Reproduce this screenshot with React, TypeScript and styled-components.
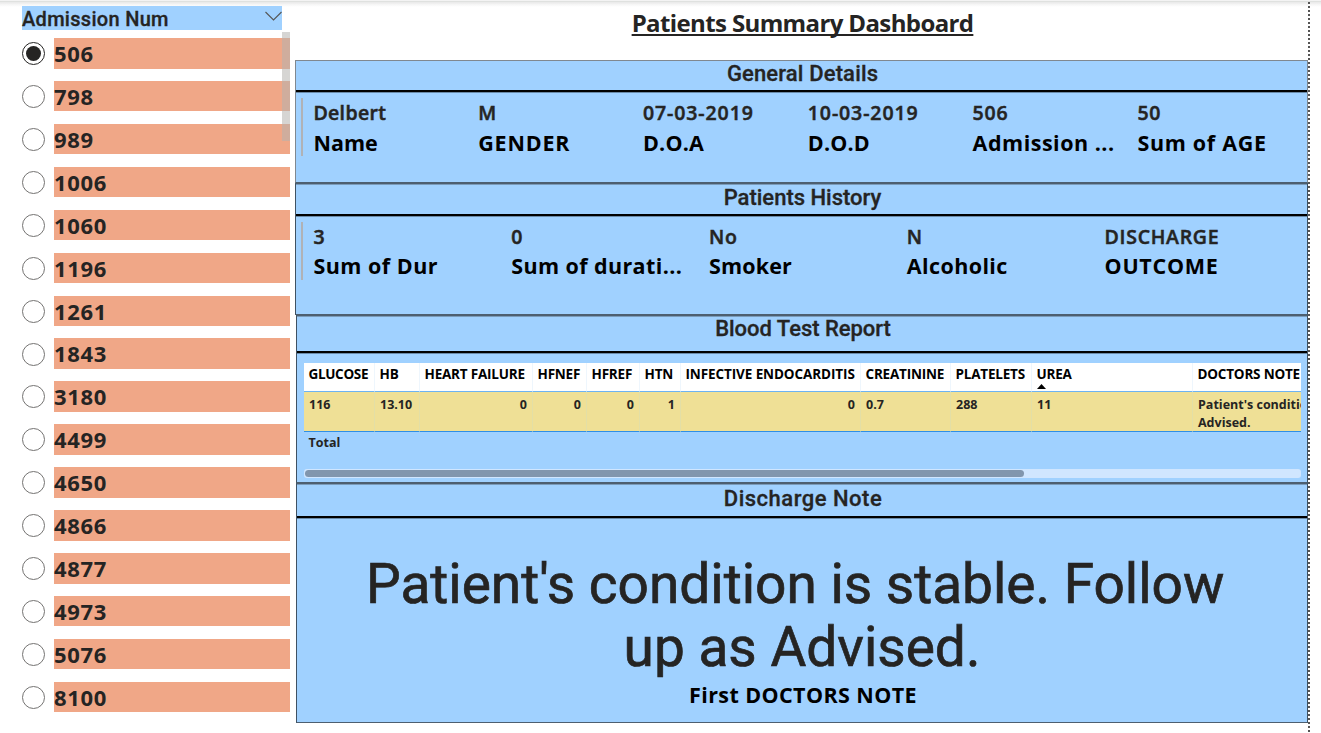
import React from "react";
import styled, { createGlobalStyle } from "styled-components";

const BLUE = "#a0d1ff";
const UI = `"Open Sans", "Noto Sans", sans-serif`;
const DIN = `Roboto, "Liberation Sans", sans-serif`;

const Global = createGlobalStyle`
  * { box-sizing: border-box; }
  body { margin: 0; background: #fff; color: #252423; font-family: ${UI}; overflow: hidden; }
`;

const Page = styled.div`
  position: relative;
  display: flex;
  width: 1321px;
  height: 733px;
  padding-left: 22px;
  overflow: hidden;
`;

const TopShadow = styled.div`
  position: absolute;
  inset: 0 0 auto 0;
  height: 7px;
  background: linear-gradient(#f3f3f3 0 1px, #dfe1df 1px 2px, #ebebeb 2px 3px, #f4f4f4 4px, #fff 7px);
`;

const Slicer = styled.aside`
  position: relative;
  width: 268px;
  padding-top: 6px;
`;

const SlicerHeader = styled.div`
  display: flex;
  justify-content: space-between;
  width: 260px;
  height: 24px;
  background: ${BLUE};
  font: 500 20px/26px ${DIN};
  letter-spacing: 0.3px;
  -webkit-text-stroke: 0.3px;
  svg { margin: 5px 0 0; }
`;

const Options = styled.div`
  display: flex;
  flex-direction: column;
  gap: 12.43px;
  padding-top: 8px;
`;

const Option = styled.label`
  display: flex;
  align-items: center;
  gap: 9px;
  height: 30.5px;
`;

const Radio = styled.span<{ $on?: boolean }>`
  display: grid;
  place-items: center;
  width: 23px;
  height: 23px;
  margin-top: 0.6px;
  border: 1.4px solid ${(p) => (p.$on ? "#252423" : "#747372")};
  border-radius: 50%;
  &::after {
    content: "";
    width: 15px;
    height: 15px;
    border-radius: 50%;
    background: ${(p) => (p.$on ? "#252423" : "transparent")};
  }
`;

const OptionText = styled.span`
  flex: 1;
  height: 30.5px;
  background: #f0a787;
  font: 700 22px/31px ${UI};
  letter-spacing: 0.7px;
`;

const SlicerThumb = styled.div`
  position: absolute;
  right: 0;
  top: 32px;
  width: 8px;
  height: 109px;
  background: rgba(180, 178, 174, 0.55);
`;

const Report = styled.main`
  width: 1013px;
  margin-left: 5px;
`;

const Title = styled.h1`
  margin: 0;
  height: 60px;
  padding: 6px 0 0 2px;
  text-align: center;
  font: 700 24px/34px ${UI};
  letter-spacing: -0.62px;
  text-decoration: underline;
  text-decoration-thickness: 2px;
  text-underline-offset: 2px;
  text-decoration-skip-ink: none;
`;

const Panel = styled.section<{ $h: number; $edge?: string; $indent?: boolean }>`
  height: ${(p) => p.$h}px;
  margin-left: ${(p) => (p.$indent ? 1 : 0)}px;
  background: ${BLUE};
  border: 1px solid ${(p) => p.$edge ?? "#3f5263"};
  border-bottom-color: #4d5f70;
  border-top-color: ${(p) => p.$edge ?? "#4d5f70"};
  box-shadow: ${(p) => (p.$edge ? "none" : "inset 0 1px #7a9bba")};
`;

const PanelTitle = styled.h2<{ $h: number; $ls: number; $lh?: number }>`
  margin: 0;
  height: ${(p) => p.$h}px;
  padding-left: 2px;
  border-bottom: 2px solid #000;
  box-shadow: 0 1px #6a8aa8;
  text-align: center;
  font: 500 22px/${(p) => p.$lh ?? 27}px ${DIN};
  letter-spacing: ${(p) => p.$ls}px;
  -webkit-text-stroke: 0.3px;
`;

const CardRow = styled.div<{ $cols: number; $pitch: number }>`
  display: grid;
  grid-template-columns: repeat(${(p) => p.$cols}, ${(p) => p.$pitch}px);
  height: 58px;
  margin: 6px 0 0 5px;
  padding-left: 10.4px;
  border-left: 2px solid #b0b2b6;
`;

const Field = styled.div`
  white-space: nowrap;
`;

const FieldValue = styled.div<{ $ls: number }>`
  font: 600 19.5px/29px ${UI};
  letter-spacing: ${(p) => p.$ls}px;
  -webkit-text-stroke: 0.5px;
`;

const FieldLabel = styled.div<{ $ls: number; $lh: number }>`
  color: #000;
  font: 700 21.5px/${(p) => p.$lh}px ${UI};
  letter-spacing: ${(p) => p.$ls}px;
`;

const Viewport = styled.div`
  width: 997px;
  margin: 10px 0 0 7px;
  overflow: hidden;
`;

const Grid = styled.div`
  display: grid;
  grid-template-columns: 71px 45px 113px 54px 53px 41px 180px 90px 81px 161px 260px;
  font: 700 12.5px/18px ${UI};
`;

const HeadCell = styled.div<{ $ls?: number }>`
  position: relative;
  height: 29px;
  padding: 2px 0 0 4.5px;
  background: #fff;
  color: #000;
  font-size: 13.5px;
  border-right: 1px solid #eef6fd;
  border-bottom: 1px solid #6db3f2;
  white-space: nowrap;
  letter-spacing: ${(p) => p.$ls ?? -0.2}px;
`;

const SortMark = styled.svg`
  position: absolute;
  left: 5px;
  top: 21px;
`;

const Cell = styled.div<{ $right?: boolean }>`
  height: 40px;
  padding: 4px 5px 0 5px;
  background: #efe096;
  border-right: 1px solid #e3dfa6;
  border-bottom: 1px solid #2f8fe6;
  text-align: ${(p) => (p.$right ? "right" : "left")};
  white-space: pre;
`;

const Total = styled.div`
  height: 37px;
  padding: 1px 0 0 4.5px;
  font: 700 12.5px/20px ${UI};
`;

const Track = styled.div`
  height: 9px;
  padding: 1px;
  border-radius: 3px;
  background: #d0e6ff;
`;

const Thumb = styled.div`
  width: 719px;
  height: 7px;
  border-radius: 4px;
  background: #8196ae;
`;

const Note = styled.div`
  padding-top: 35px;
  text-align: center;
  font: 400 55px/63px ${DIN};
  letter-spacing: 0;
  -webkit-text-stroke: 0.7px;
  white-space: pre;
`;

const NoteLabel = styled.div`
  padding-left: 2px;
  color: #000;
  text-align: center;
  font: 700 21.5px/32px ${UI};
  letter-spacing: 0.4px;
`;

const PageEdge = styled.div`
  position: absolute;
  left: 1308px;
  top: 2px;
  bottom: 0;
  width: 2px;
  background: repeating-linear-gradient(#555 0 2px, #fff 2px 4px);
`;

const ids = ["506", "798", "989", "1006", "1060", "1196", "1261", "1843", "3180", "4499", "4650", "4866", "4877", "4973", "5076", "8100"];

type Item = { value: string; label: string; valueLs?: number; labelLs?: number };

const general: Item[] = [
  { value: "Delbert", label: "Name", valueLs: 0.35, labelLs: 0.05 },
  { value: "M", label: "GENDER", labelLs: 0.8 },
  { value: "07-03-2019", label: "D.O.A", valueLs: 0.9, labelLs: 0.2 },
  { value: "10-03-2019", label: "D.O.D", valueLs: 0.9, labelLs: 0.2 },
  { value: "506", label: "Admission ..." },
  { value: "50", label: "Sum of AGE", labelLs: 0.7 },
];

const history: Item[] = [
  { value: "3", label: "Sum of Dur" },
  { value: "0", label: "Sum of durati...", labelLs: 0.4 },
  { value: "No", label: "Smoker", labelLs: 0.15 },
  { value: "N", label: "Alcoholic", labelLs: 0.4 },
  { value: "DISCHARGE", label: "OUTCOME", valueLs: 0.7, labelLs: 0.7 },
];

const tests: { head: string; value: string; right?: boolean; sorted?: boolean; ls?: number }[] = [
  { head: "GLUCOSE", value: "116", ls: -0.33 },
  { head: "HB", value: "13.10" },
  { head: "HEART FAILURE", value: "0", right: true },
  { head: "HFNEF", value: "0", right: true },
  { head: "HFREF", value: "0", right: true },
  { head: "HTN", value: "1", right: true },
  { head: "INFECTIVE ENDOCARDITIS", value: "0", right: true, ls: -0.1 },
  { head: "CREATININE", value: "0.7" },
  { head: "PLATELETS", value: "288" },
  { head: "UREA", value: "11", sorted: true },
  { head: "DOCTORS NOTE", value: "Patient's condition is stable.\nAdvised." },
];

function Cards({ items, pitch, labelHeight }: { items: Item[]; pitch: number; labelHeight: number }) {
  return (
    <CardRow $cols={items.length} $pitch={pitch}>
      {items.map((it) => (
        <Field key={it.label}>
          <FieldValue $ls={it.valueLs ?? 0.8}>{it.value}</FieldValue>
          <FieldLabel $ls={it.labelLs ?? 0.5} $lh={labelHeight}>
            {it.label}
          </FieldLabel>
        </Field>
      ))}
    </CardRow>
  );
}

export default function App() {
  return (
    <>
      <Global />
      <Page>
        <TopShadow />
        <Slicer>
          <SlicerHeader>
            <span>Admission Num</span>
            <svg width="17" height="11" viewBox="0 0 17 11" fill="none" stroke="#555" strokeWidth="1.1">
              <path d="M0.5 1 L8.5 9 L16.5 1" />
            </svg>
          </SlicerHeader>
          <Options>
            {ids.map((id, i) => (
              <Option key={id}>
                <Radio $on={i === 0} />
                <OptionText>{id}</OptionText>
              </Option>
            ))}
          </Options>
          <SlicerThumb />
        </Slicer>
        <Report>
          <Title>Patients Summary Dashboard</Title>
          <Panel $h={123} $edge="#808890">
            <PanelTitle $h={31} $ls={0.15} $lh={25}>General Details</PanelTitle>
            <Cards items={general} pitch={164.8} labelHeight={31} />
          </Panel>
          <Panel $h={132}>
            <PanelTitle $h={32} $ls={0}>Patients History</PanelTitle>
            <Cards items={history} pitch={197.8} labelHeight={29} />
          </Panel>
          <Panel $h={168} $indent>
            <PanelTitle $h={37} $ls={-0.03} $lh={25}>Blood Test Report</PanelTitle>
            <Viewport>
              <Grid>
                {tests.map((t) => (
                  <HeadCell key={t.head} $ls={t.ls}>
                    {t.head}
                    {t.sorted && (
                      <SortMark width="9" height="5" viewBox="0 0 9 5">
                        <path d="M0 5 L4.5 0 L9 5 Z" fill="#000" />
                      </SortMark>
                    )}
                  </HeadCell>
                ))}
                {tests.map((t) => (
                  <Cell key={t.head} $right={t.right}>
                    {t.value}
                  </Cell>
                ))}
              </Grid>
              <Total>Total</Total>
              <Track>
                <Thumb />
              </Track>
            </Viewport>
          </Panel>
          <Panel $h={240} $indent>
            <PanelTitle $h={34} $ls={0.5} $lh={29}>Discharge Note</PanelTitle>
            <Note>{"Patient's condition is stable. Follow \nup as Advised."}</Note>
            <NoteLabel>First DOCTORS NOTE</NoteLabel>
          </Panel>
        </Report>
        <PageEdge />
      </Page>
    </>
  );
}
